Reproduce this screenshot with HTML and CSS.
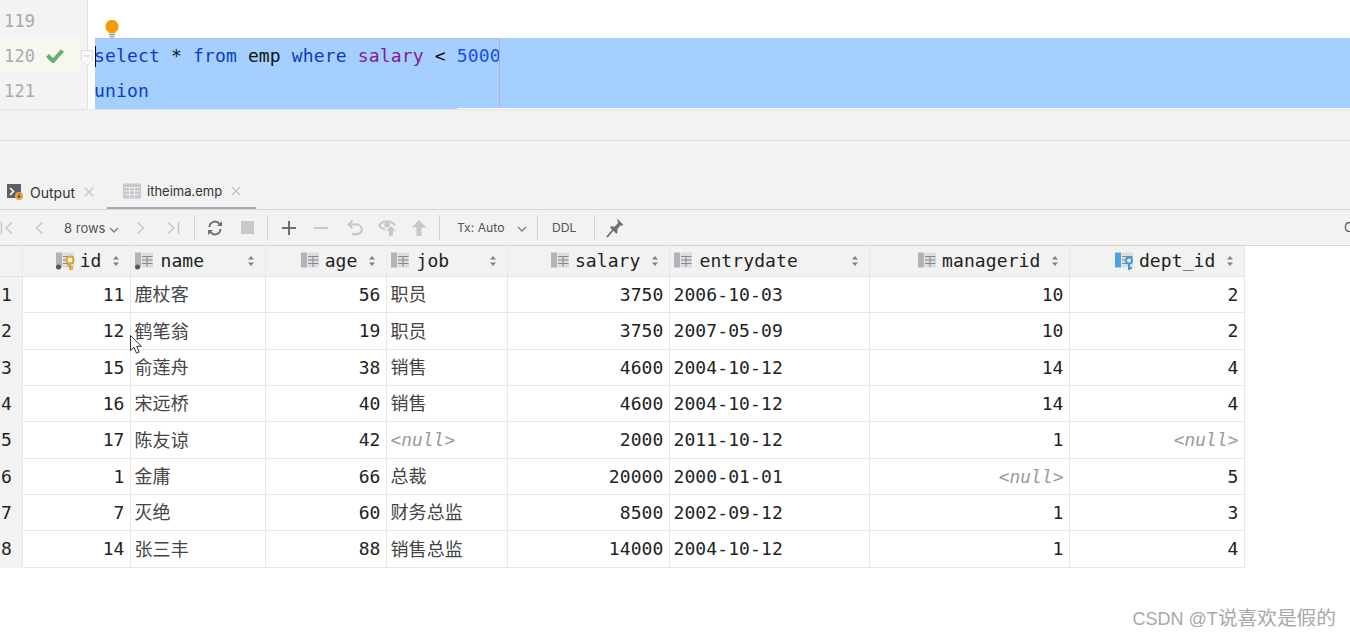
FILE: index.html
```html
<!DOCTYPE html>
<html lang="zh">
<head>
<meta charset="utf-8">
<title>itheima.emp</title>
<link rel="stylesheet" href="styles.css">
</head>
<body>
<svg class="defs" width="0" height="0" aria-hidden="true">
  <symbol id="col" viewBox="0 0 18 16"><rect x="0" y="0.500" width="6" height="15" fill="#b2b4b7"/><path d="M6.500.500H18v15H6.500z" fill="#dcdde0"/><path d="M7 4.500h10.500M7 8h10.500M7 11.500h10.500M12 4.500V15" stroke="#85888c" stroke-width="1" fill="none"/></symbol>
  <symbol id="sort" viewBox="0 0 6 10"><path d="M3 0l3 3.600H0zM3 10L0 6.400h6z" fill="#7f8285"/></symbol>
  <symbol id="chev" viewBox="0 0 10 6"><path d="M1 1l4 4 4-4" stroke="#7b7e81" stroke-width="1.300" fill="none"/></symbol>
</svg>

<section class="editor">
  <div class="line">
    <div class="gutter"><span class="num">119</span></div>
    <div class="code"></div>
  </div>
  <div class="line current">
    <div class="gutter"><span class="num">120</span>
      <svg class="check" viewBox="0 0 18 14" width="18" height="14"><path d="M1.500 6.500l5.500 5.500L16.500 1.500" stroke="#62b16f" stroke-width="4" fill="none"/></svg>
    </div>
    <div class="code sel"><span class="k">select</span> <span class="o">*</span> <span class="k">from</span> <span class="o">emp</span> <span class="k">where</span> <span class="f">salary</span> <span class="o">&lt;</span> <span class="n">5000</span></div>
  </div>
  <div class="line">
    <div class="gutter"><span class="num">121</span></div>
    <div class="code sel"><span class="k">union</span></div>
  </div>
  <svg class="bulb" viewBox="0 0 14 18" width="14" height="18"><path d="M7 0a6.500 6.500 0 0 1 3.500 12l-.5 1H4l-.5-1A6.500 6.500 0 0 1 7 0z" fill="#f59d00"/><path d="M4 14.500h6M4.500 16.800h5" stroke="#8f8f8f" stroke-width="1.300"/></svg>
  <svg class="fold" viewBox="0 0 12 16" width="12" height="16"><path d="M.5.500h11v10L6 15.500.5 10.500z" fill="#fbfbfb" stroke="#dcdcdc"/><path d="M3 6h6" stroke="#c9c9c9"/></svg>
  <span class="caret"></span>
  <span class="sel-frame"></span>
  <span class="sel-next"></span>
</section>

<div class="status"></div>
<div class="spacer"></div>

<nav class="tabs">
  <div class="tab">
    <svg viewBox="0 0 16 16" width="16" height="16"><rect width="14" height="14" fill="#5c6066"/><path d="M3 4l3.500 3.500L3 11" stroke="#fff" stroke-width="1.600" fill="none"/><circle cx="12" cy="12" r="4" fill="#e8a33d"/><path d="M12 9.500v4M10.500 12l1.500 1.800 1.500-1.800" stroke="#5c4420" fill="none"/></svg>
    <span>Output</span>
    <svg class="x" viewBox="0 0 10 10" width="10" height="10"><path d="M1 1l8 8M9 1l-8 8" stroke="#c4c4c4" stroke-width="1.200"/></svg>
  </div>
  <div class="tab active">
    <svg viewBox="0 0 18 16" width="18" height="16"><rect y="0.500" width="18" height="15" fill="#c5c8cc"/><path d="M1 4.500h16M1 8h16M1 11.500h16M6.500 4.500V15M11.500 4.500V15" stroke="#eeeff1"/></svg>
    <span>itheima.emp</span>
    <svg class="x" viewBox="0 0 10 10" width="10" height="10"><path d="M1 1l8 8M9 1l-8 8" stroke="#c4c4c4" stroke-width="1.200"/></svg>
  </div>
</nav>

<div class="toolbar">
  <div class="group first">
    <span class="btn edge"><svg viewBox="0 0 14 14" width="14" height="14"><path d="M1.500 1v12M12 1.500L6 7l6 5.500" stroke="#c6c8ca" stroke-width="1.500" fill="none"/></svg></span>
    <span class="btn gap9"><svg viewBox="0 0 10 14" width="10" height="14"><path d="M8.500 1.500L2.500 7l6 5.500" stroke="#c6c8ca" stroke-width="1.500" fill="none"/></svg></span>
    <span class="rows">8 rows <svg class="chev" width="10" height="6"><use href="#chev"/></svg></span>
    <span class="btn"><svg viewBox="0 0 10 14" width="10" height="14"><path d="M1.500 1.500L7.500 7l-6 5.500" stroke="#c6c8ca" stroke-width="1.500" fill="none"/></svg></span>
    <span class="btn"><svg viewBox="0 0 14 14" width="14" height="14"><path d="M12.500 1v12M2 1.500L8 7l-6 5.500" stroke="#c6c8ca" stroke-width="1.500" fill="none"/></svg></span>
  </div>
  <i class="sep"></i>
  <div class="group">
    <span class="btn"><svg viewBox="0 0 16 16" width="16" height="16"><path d="M2.500 7A5.500 5.500 0 0 1 12.500 4M13.500 9A5.500 5.500 0 0 1 3.500 12" stroke="#6e6e6e" stroke-width="2" fill="none"/><path d="M15 1v5h-5zM1 15v-5h5z" fill="#6e6e6e"/></svg></span>
    <span class="btn"><svg viewBox="0 0 13 13" width="13" height="13"><rect width="13" height="13" fill="#c9c9c9"/></svg></span>
  </div>
  <i class="sep"></i>
  <div class="group edit">
    <span class="btn"><svg viewBox="0 0 14 14" width="14" height="14"><path d="M7 0v14M0 7h14" stroke="#6e6e6e" stroke-width="2"/></svg></span>
    <span class="btn"><svg viewBox="0 0 14 14" width="14" height="14"><path d="M0 7h14" stroke="#c6c8ca" stroke-width="2"/></svg></span>
    <span class="btn undo"><svg viewBox="0 0 16 16" width="16" height="16"><path d="M5.500 .800L1.500 4.500 5.500 8.200" stroke="#c6c8ca" stroke-width="2.200" fill="none"/><path d="M2 4.500h8a4.800 4.800 0 0 1 0 9.600H5" stroke="#c6c8ca" stroke-width="2.200" fill="none"/></svg></span>
    <span class="btn"><svg viewBox="0 0 19 17" width="19" height="17"><path d="M1 6.500C5 1 13 1 17 6.500" stroke="#c6c8ca" stroke-width="2.200" fill="none"/><path d="M1 6.500c2 2.500 4 3.500 6 3.800" stroke="#c6c8ca" stroke-width="2.200" fill="none"/><circle cx="9" cy="6" r="2.700" fill="#c6c8ca"/><path d="M13 7l5 5h-3v5h-4v-5H8z" fill="#c6c8ca"/></svg></span>
    <span class="btn"><svg viewBox="0 0 16 16" width="16" height="16"><path d="M8 0l7.500 7.500h-5V16h-5V7.500h-5z" fill="#c6c8ca"/></svg></span>
  </div>
  <i class="sep"></i>
  <span class="label tx">Tx: Auto <svg class="chev" width="10" height="6"><use href="#chev"/></svg></span>
  <i class="sep"></i>
  <span class="label ddl">DDL</span>
  <i class="sep"></i>
  <span class="btn"><svg viewBox="0 0 18 20" width="18" height="20"><path d="M11 .500l6.500 6.500-1.800.8-1-.5-3.500 4 .4 3.500-1.300 1L4 9.500l1.200-1.200 3.300.5 3.800-4-.8-1.400z" fill="#6e6e6e"/><path d="M7 12L1 19" stroke="#6e6e6e" stroke-width="1.800"/></svg></span>
  <span class="clip">C</span>
</div>

<table class="grid">
  <colgroup><col class="c0"><col class="c1"><col class="c2"><col class="c3"><col class="c4"><col class="c5"><col class="c6"><col class="c7"><col class="c8"></colgroup>
  <thead>
    <tr>
      <th></th>
      <th><div class="h r"><svg class="ic" width="20" height="18" viewBox="0 0 20 18"><use href="#col" width="18" height="16"/><circle cx="2.500" cy="15" r="2.500" fill="#555"/><circle cx="14" cy="8" r="3.500" fill="#f2f2f2" stroke="#e3a52c" stroke-width="2.200"/><path d="M14 11v7M14 15h3M14 17.500h3" stroke="#e3a52c" stroke-width="2"/></svg><b>id</b><svg class="s" width="6" height="10"><use href="#sort"/></svg></div></th>
      <th><div class="h"><svg class="ic" width="20" height="18" viewBox="0 0 20 18"><use href="#col" width="18" height="16"/><circle cx="2.500" cy="15" r="2.500" fill="#555"/></svg><b>name</b><svg class="s" width="6" height="10"><use href="#sort"/></svg></div></th>
      <th><div class="h r"><svg class="ic" width="20" height="18" viewBox="0 0 20 18"><use href="#col" width="18" height="16"/></svg><b>age</b><svg class="s" width="6" height="10"><use href="#sort"/></svg></div></th>
      <th><div class="h"><svg class="ic" width="20" height="18" viewBox="0 0 20 18"><use href="#col" width="18" height="16"/></svg><b>job</b><svg class="s" width="6" height="10"><use href="#sort"/></svg></div></th>
      <th><div class="h r"><svg class="ic" width="20" height="18" viewBox="0 0 20 18"><use href="#col" width="18" height="16"/></svg><b>salary</b><svg class="s" width="6" height="10"><use href="#sort"/></svg></div></th>
      <th><div class="h"><svg class="ic" width="20" height="18" viewBox="0 0 20 18"><use href="#col" width="18" height="16"/></svg><b>entrydate</b><svg class="s" width="6" height="10"><use href="#sort"/></svg></div></th>
      <th><div class="h r"><svg class="ic" width="20" height="18" viewBox="0 0 20 18"><use href="#col" width="18" height="16"/></svg><b>managerid</b><svg class="s" width="6" height="10"><use href="#sort"/></svg></div></th>
      <th><div class="h r"><svg class="ic" width="20" height="18" viewBox="0 0 20 18"><path d="M0 .500h6v15H0z" fill="#4da3de"/><path d="M6.500.500H18v15H6.500z" fill="#dcdde0"/><path d="M7 4.500h10.500M7 8h10.500M7 11.500h5" stroke="#85888c" fill="none"/><circle cx="14" cy="8.500" r="3" fill="#f2f2f2" stroke="#3d9bdc" stroke-width="2"/><path d="M14 11.500v6.500M14 16h3" stroke="#3d9bdc" stroke-width="2"/></svg><b>dept_id</b><svg class="s" width="6" height="10"><use href="#sort"/></svg></div></th>
    </tr>
  </thead>
  <tbody>
    <tr><th>1</th><td class="r">11</td><td class="t">鹿杖客</td><td class="r">56</td><td class="t">职员</td><td class="r">3750</td><td class="m">2006-10-03</td><td class="r">10</td><td class="r">2</td></tr>
    <tr class="tall"><th>2</th><td class="r">12</td><td class="t">鹤笔翁</td><td class="r">19</td><td class="t">职员</td><td class="r">3750</td><td class="m">2007-05-09</td><td class="r">10</td><td class="r">2</td></tr>
    <tr><th>3</th><td class="r">15</td><td class="t">俞莲舟</td><td class="r">38</td><td class="t">销售</td><td class="r">4600</td><td class="m">2004-10-12</td><td class="r">14</td><td class="r">4</td></tr>
    <tr><th>4</th><td class="r">16</td><td class="t">宋远桥</td><td class="r">40</td><td class="t">销售</td><td class="r">4600</td><td class="m">2004-10-12</td><td class="r">14</td><td class="r">4</td></tr>
    <tr class="tall"><th>5</th><td class="r">17</td><td class="t">陈友谅</td><td class="r">42</td><td class="m nul">&lt;null&gt;</td><td class="r">2000</td><td class="m">2011-10-12</td><td class="r">1</td><td class="r nul">&lt;null&gt;</td></tr>
    <tr><th>6</th><td class="r">1</td><td class="t">金庸</td><td class="r">66</td><td class="t">总裁</td><td class="r">20000</td><td class="m">2000-01-01</td><td class="r nul">&lt;null&gt;</td><td class="r">5</td></tr>
    <tr><th>7</th><td class="r">7</td><td class="t">灭绝</td><td class="r">60</td><td class="t">财务总监</td><td class="r">8500</td><td class="m">2002-09-12</td><td class="r">1</td><td class="r">3</td></tr>
    <tr class="tall"><th>8</th><td class="r">14</td><td class="t">张三丰</td><td class="r">88</td><td class="t">销售总监</td><td class="r">14000</td><td class="m">2004-10-12</td><td class="r">1</td><td class="r">4</td></tr>
  </tbody>
</table>

<svg class="pointer" viewBox="0 0 12 20" width="12" height="20"><path d="M.5.500v15l3.500-3.300 2.500 6 2.700-1.100-2.500-5.800h4.800z" fill="#fff" stroke="#333" stroke-width="1"/></svg>
<div class="mark"><span class="latin">CSDN @T</span>说喜欢是假的</div>
</body>
</html>
```
FILE: styles.css
```css
* { box-sizing: border-box; }
html, body { margin: 0; height: 100%; }
body {
  position: relative;
  width: 1350px;
  height: 637px;
  overflow: hidden;
  background: #fff;
  font-family: "Inter", "Noto Sans", sans-serif;
  color: #333;
}
.defs { position: absolute; }

/* editor */
.editor {
  position: relative;
  height: 110px;
  padding-top: 3px;
  background: linear-gradient(to right, #f3f3f3 87px, #e2e2e2 87px, #e2e2e2 88px, #fff 88px);
  border-bottom: 1px solid #e4e4e4;
  font: 18px/35px "DejaVu Sans Mono", monospace;
  letter-spacing: .15px;
}
.line { display: flex; height: 35px; }
.gutter {
  position: relative;
  width: 88px;
  flex: none;
  padding: 1px 0 0 4px;
  color: #a9a9a9;
  font-size: 17px;
}
.current .gutter { background: #f7f7f0; width: 80px; margin-right: 8px; }
.check { position: absolute; left: 46px; top: 11px; }
.code {
  flex: 1;
  margin-left: 7px;
  text-indent: -1px;
  white-space: pre;
}
.sel { background: #a4cffe; }
.k { color: #0b3cc5; }
.o { color: #111; }
.f { color: #87189d; }
.n { color: #1750eb; }
.bulb { position: absolute; left: 105px; top: 20px; }
.fold { position: absolute; left: 81px; top: 50px; }
.caret { position: absolute; left: 95px; top: 46px; width: 1px; height: 21px; background: #111; }
.sel-frame {
  position: absolute;
  left: 95px;
  top: 38px;
  width: 405px;
  height: 70px;
  border: 1px solid #b6a9ea;
  border-left: 0;
  border-bottom: 0;
  border-top-color: #b3b8ef;
}
.sel-next {
  position: absolute;
  left: 95px;
  top: 108px;
  width: 362px;
  height: 1px;
  background: #a4cffe;
}

/* bars */
.status { height: 31px; background: #f2f2f2; border-bottom: 1px solid #dcdcdc; }
.spacer { height: 34px; background: #f2f2f2; }
.tabs {
  display: flex;
  height: 35px;
  padding-left: 7px;
  background: #f2f2f2;
  border-bottom: 1px solid #d5d5d5;
  font-size: 14px;
  color: #333;
}
.tab { display: flex; align-items: center; gap: 7px; height: 34px; }
.tab .x { margin-left: 2px; }
.tab:first-child { width: 100px; }
.tab.active {
  width: 149px;
  padding-left: 16px;
  gap: 6px;
  font-size: 13px;
  border-bottom: 2px solid #a9a9bd;
}
.tab.active .x { margin-left: 3px; }
.toolbar {
  display: flex;
  align-items: center;
  position: relative;
  height: 36px;
  background: #f2f2f2;
  border-bottom: 1px solid #d5d5d5;
  font-size: 13px;
  color: #555;
}
.group { display: flex; align-items: center; }
.group.edit { margin-left: 1px; }
.btn { display: flex; width: 32px; justify-content: center; align-items: center; flex: none; }
.btn.edge { width: 14px; }
.btn.gap9 { margin-left: 9px; }
.btn.undo { margin-left: 2px; }
.rows { width: 70px; padding-left: 9px; white-space: nowrap; }
.chev { vertical-align: 0; }
.sep { width: 1px; height: 25px; background: #d3d3d3; margin: 0 4px; flex: none; }
.group.first { margin-right: 1px; }
.label { white-space: nowrap; font-size: 12.200px; }
.tx { padding-left: 13px; width: 89px; }
.tx .chev { margin-left: 9px; }
.ddl { padding-left: 10px; width: 48px; }
.clip { position: absolute; left: 1344px; top: 9px; }

/* table */
.grid {
  width: 1244px;
  table-layout: fixed;
  border-collapse: collapse;
  font: 18px "DejaVu Sans Mono", monospace;
  letter-spacing: .1px;
  color: #222;
}
.c0 { width: 22px; } .c1 { width: 108px; } .c2 { width: 135px; } .c3 { width: 121px; }
.c4 { width: 121px; } .c5 { width: 162px; } .c6 { width: 200px; } .c7 { width: 200px; } .c8 { width: 175px; }
.grid thead tr { height: 30px; }
.grid tbody tr { height: 36px; }
.grid tbody tr.tall { height: 37px; }
.grid th { padding: 0; background: #f2f2f2; font-weight: 400; }
.grid thead th { border-right: 1px solid #e9e9e9; border-bottom: 1px solid #e4e4e4; }
.grid tbody th { text-align: left; padding-left: 1px; border-bottom: 1px solid #f2f2f2; }
.grid td {
  padding: 0 5px 0 4px;
  border: 1px solid #e7e7e7;
  white-space: nowrap;
  overflow: hidden;
}
.grid td.r { text-align: right; }
.grid td.t { padding-bottom: 2px; font-family: "Noto Sans CJK SC", sans-serif; color: #444; }
.nul { font-style: italic; font-size: 17.800px; }
.grid td.nul { color: #9a9a9a; }
.h { display: flex; align-items: center; padding: 0 11px 0 4px; }
.h.r { justify-content: flex-end; }
.h b { font-weight: 400; margin-left: 6px; color: #222; }
.h.r b { margin-left: 4px; }
.h.r .s { margin-left: 11px; }
.h:not(.r) .s { margin-left: auto; }
.ic { flex: none; }
.s { flex: none; }

/* overlays */
.pointer { position: absolute; left: 130px; top: 335px; }
.mark {
  position: absolute;
  right: 14px;
  top: 606px;
  font: 19.700px/24px "Liberation Sans", "Noto Sans CJK SC", sans-serif;
  color: #a8a8a8;
  white-space: nowrap;
}
.latin { font-size: 18px; }
```
